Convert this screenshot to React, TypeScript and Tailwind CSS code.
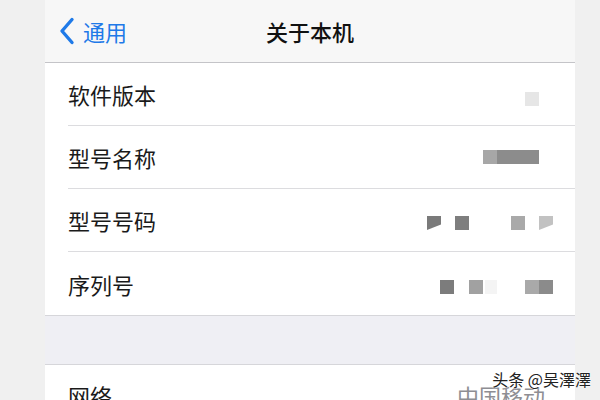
import React from "react";

const cjk = { fontFamily: '"Noto Sans CJK SC", "Noto Sans", sans-serif' };

type Block = { x: number; w: number; c: string; skew?: boolean };

// 模糊处理过的数值：用灰色方块表示
const Blur = ({ blocks }: { blocks: Block[] }) => (
  <div className="relative h-[14px] w-[130px]">
    {blocks.map((b, i) => (
      <div
        key={i}
        className={`absolute top-0 h-[14px] ${b.skew ? "[clip-path:polygon(0_0,100%_0,100%_60%,0_100%)]" : ""}`}
        style={{ left: b.x, width: b.w, background: b.c }}
      />
    ))}
  </div>
);

const rows: { label: string; blocks: Block[]; offset: number }[] = [
  { label: "软件版本", blocks: [{ x: 110, w: 14, c: "#e6e6e6" }], offset: 5 },
  {
    label: "型号名称",
    blocks: [
      { x: 68, w: 14, c: "#a7a7a7" },
      { x: 82, w: 42, c: "#8c8c8c" },
    ],
    offset: 0,
  },
  {
    label: "型号号码",
    blocks: [
      { x: 12, w: 14, c: "#7a7a7a", skew: true },
      { x: 40, w: 14, c: "#7e7e7e" },
      { x: 96, w: 14, c: "#a9a9a9" },
      { x: 124, w: 14, c: "#c2c2c2", skew: true },
    ],
    offset: 3,
  },
  {
    label: "序列号",
    blocks: [
      { x: 25, w: 14, c: "#7c7c7c" },
      { x: 54, w: 14, c: "#a1a1a1" },
      { x: 70, w: 12, c: "#f4f4f4" },
      { x: 110, w: 14, c: "#a9a9a9" },
      { x: 124, w: 14, c: "#8b8b8b" },
    ],
    offset: 3,
  },
];

export default function App() {
  return (
    <div className="flex h-[400px] w-[600px] overflow-hidden bg-[#f0f0f0]" style={cjk}>
      <div className="w-[45px] shrink-0" />
      <div className="flex w-[530px] shrink-0 flex-col">
        {/* 导航栏 */}
        <div className="grid h-[63px] shrink-0 grid-cols-[1fr_auto_1fr] items-center border-b border-[#c4c4c8] bg-[#f7f7f7]">
          <div className="flex items-center pl-[14px] text-[#1f7ae8]">
            <svg width="16" height="28" viewBox="0 0 16 28" fill="none">
              <path d="M13 2.5 L3 14 L13 25.5" stroke="currentColor" strokeWidth="3.4" strokeLinecap="round" strokeLinejoin="round" />
            </svg>
            <span className="ml-[8px] text-[22px] leading-none">通用</span>
          </div>
          <div className="text-[22px] font-medium leading-none text-[#111]">关于本机</div>
          <div />
        </div>

        {/* 信息列表 */}
        <div className="bg-white">
          {rows.map((r, i) => (
            <div key={r.label} className="pl-[23px]">
              <div
                className={`flex h-[63px] items-center justify-between ${
                  i < rows.length - 1 ? "border-b border-[#dcdcdf]" : ""
                }`}
              >
                <span className="text-[22px] leading-none text-[#1a1a1a]">{r.label}</span>
                <div className="pr-[30px]" style={{ marginTop: r.offset * 2 }}>
                  <Blur blocks={r.blocks} />
                </div>
              </div>
            </div>
          ))}
        </div>
        <div className="h-[50px] shrink-0 border-y border-[#d6d6da] bg-[#efeff4]" />

        {/* 网络 */}
        <div className="relative flex h-[63px] items-start justify-between bg-white pl-[23px] pr-[30px] pt-[19px]">
          <span className="text-[22px] leading-none text-[#1a1a1a]">网络</span>
          <span className="text-[22px] leading-none text-[#8e8e93]">中国移动</span>
          <div className="absolute right-[-16px] top-[6px] text-[16px] leading-none text-[#222] [text-shadow:0_0_2px_#fff,0_0_2px_#fff]">
            头条 @吴澤澤
          </div>
        </div>
      </div>
      <div className="w-[25px] shrink-0" />
    </div>
  );
}
